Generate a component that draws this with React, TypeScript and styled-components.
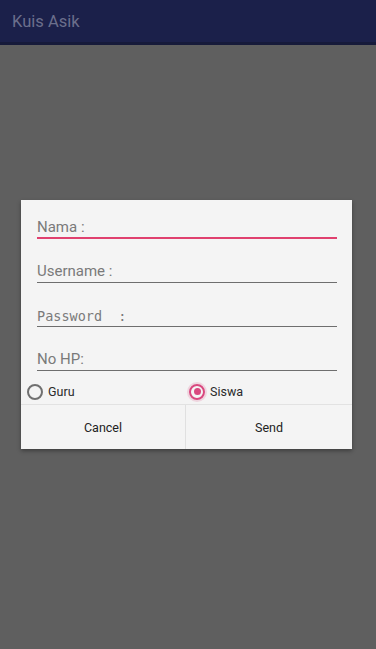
import React from "react";
import styled, { createGlobalStyle } from "styled-components";

const Global = createGlobalStyle`
  html, body { margin: 0; padding: 0; }
  body { width: 376px; height: 649px; overflow: hidden; font-family: Roboto, "Noto Sans", sans-serif; }
`;

const Screen = styled.div`
  width: 376px;
  height: 649px;
  display: flex;
  flex-direction: column;
  background: #5f5f5f;
`;

const AppBar = styled.div`
  height: 42px;
  background: #1b204a;
  border-bottom: 3px solid #161a3a;
  display: flex;
  align-items: center;
  padding-left: 12px;
  color: #6b6f8c;
  font-size: 16.5px;
  font-family: Roboto, sans-serif;
`;

const Body = styled.div`
  flex: 1;
  padding: 155px 24px 0 21px;
`;

const Dialog = styled.div`
  width: 331px;
  background: #f4f4f4;
  box-shadow: 0 2px 4px rgba(0, 0, 0, 0.35);
  display: flex;
  flex-direction: column;
`;

const Fields = styled.div`
  padding: 0 15px 0 16px;
  display: flex;
  flex-direction: column;
`;

const Field = styled.div<{ $active?: boolean; $mono?: boolean; $h?: number }>`
  height: ${(p) => p.$h ?? 44}px;
  box-sizing: border-box;
  display: flex;
  align-items: flex-end;
  padding-bottom: ${(p) => (p.$active ? "1px" : "2px")};
  border-bottom: ${(p) => (p.$active ? "2px solid #e0416f" : "1px solid #6e6e6e")};
  color: #7a7a7a;
  font-family: ${(p) => (p.$mono ? '"DejaVu Sans Mono", monospace' : "Roboto, sans-serif")};
  font-size: ${(p) => (p.$mono ? "13.5px" : "15px")};
  white-space: pre;
`;

const RadioRow = styled.div`
  display: grid;
  grid-template-columns: 162px 1fr;
  height: 34px;
  box-sizing: border-box;
  padding: 8px 0 0 6px;
  align-items: center;
  border-bottom: 1px solid #e2e2e2;
`;

const RadioItem = styled.div`
  display: flex;
  align-items: center;
  gap: 5px;
  font-size: 12.5px;
  color: #2a2a2a;
  font-family: Roboto, sans-serif;
`;

const Circle = styled.span<{ $checked?: boolean }>`
  width: 12px;
  height: 12px;
  border-radius: 50%;
  border: 2px solid ${(p) => (p.$checked ? "#d9487f" : "#707070")};
  display: flex;
  align-items: center;
  justify-content: center;
  &::after {
    content: "";
    display: ${(p) => (p.$checked ? "block" : "none")};
    width: 7px;
    height: 7px;
    border-radius: 50%;
    background: #d9487f;
  }
  box-shadow: ${(p) => (p.$checked ? "0 0 0 2px rgba(217,72,127,0.18)" : "none")};
`;

const Buttons = styled.div`
  display: grid;
  grid-template-columns: 165px 1fr;
  height: 44px;
`;

const Button = styled.div<{ $divider?: boolean }>`
  display: flex;
  align-items: center;
  justify-content: center;
  font-size: 12.5px;
  color: #222;
  font-family: Roboto, sans-serif;
  border-right: ${(p) => (p.$divider ? "1px solid #e0e0e0" : "none")};
`;

export default function App() {
  return (
    <>
      <Global />
      <Screen>
        <AppBar>Kuis Asik</AppBar>
        <Body>
          <Dialog>
            <Fields>
              <Field $active $h={39}>Nama :</Field>
              <Field>Username :</Field>
              <Field $mono>{"Password  :"}</Field>
              <Field>No HP:</Field>
            </Fields>
            <RadioRow>
              <RadioItem>
                <Circle />
                Guru
              </RadioItem>
              <RadioItem>
                <Circle $checked />
                Siswa
              </RadioItem>
            </RadioRow>
            <Buttons>
              <Button $divider>Cancel</Button>
              <Button>Send</Button>
            </Buttons>
          </Dialog>
        </Body>
      </Screen>
    </>
  );
}
